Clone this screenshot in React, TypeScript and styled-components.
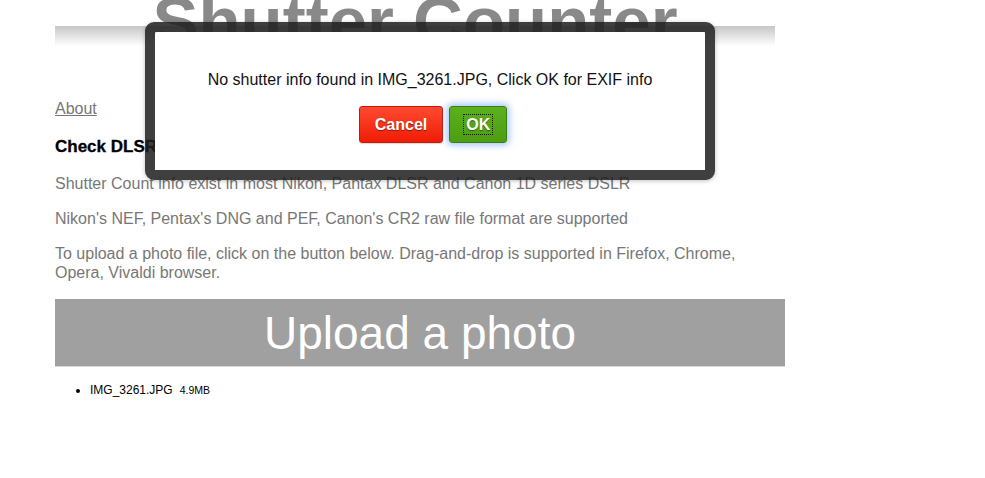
import React from "react";
import styled, { createGlobalStyle } from "styled-components";

const GlobalStyle = createGlobalStyle`
  html, body {
    margin: 0;
    padding: 0;
    background: #fff;
    font-family: "Liberation Sans", Arial, Helvetica, sans-serif;
  }
`;

const Page = styled.div`
  position: relative;
  width: 985px;
  height: 478px;
  overflow: hidden;
  padding-left: 55px;
  box-sizing: border-box;
`;

const Content = styled.div`
  width: 730px;
`;

const Header = styled.header`
  width: 720px;
  height: 46px;
  background: linear-gradient(#c6c6c6, #ffffff) bottom / 100% 20px no-repeat;
`;

const Title = styled.h1`
  margin: 0;
  font-size: 69px;
  line-height: 44px;
  font-weight: 700;
  color: #898989;
  text-align: center;
  white-space: nowrap;
`;

const Nav = styled.div`
  margin-top: 54px;
  line-height: 18px;
  font-size: 16px;
`;

const NavLink = styled.a`
  color: #777;
  text-decoration: underline;
`;

const Heading = styled.h3`
  margin: 19px 0 0;
  font-size: 17px;
  line-height: 20px;
  font-weight: 700;
  color: #000;
  -webkit-text-stroke: 0.3px #000;
`;

const Text = styled.p`
  margin: 16px 0 0;
  font-size: 16px;
  line-height: 19px;
  color: #777;
  &:first-of-type {
    margin-top: 17px;
  }
`;

const UploadBar = styled.div`
  margin-top: 17px;
  height: 67px;
  background: #a0a0a0;
  border-bottom: 1px solid #d8d8d8;
  display: flex;
  align-items: center;
  justify-content: center;
  color: #fff;
  font-size: 46px;
`;

const FileList = styled.ul`
  margin: 16px 0 0;
  padding-left: 35px;
  font-size: 12px;
  line-height: 14px;
  color: #000;
`;

const FileSize = styled.span`
  margin-left: 7px;
  font-size: 10.5px;
`;

const Dialog = styled.div`
  position: absolute;
  left: 145px;
  top: 22px;
  width: 570px;
  height: 158px;
  box-sizing: border-box;
  border: 10px solid rgba(32, 32, 32, 0.86);
  border-radius: 9px;
  background-clip: padding-box;
  box-shadow: 0 1px 4px rgba(0, 0, 0, 0.25);
`;

const DialogBody = styled.div`
  height: 100%;
  background: #fff;
  border-radius: 2px;
  display: flex;
  flex-direction: column;
  align-items: center;
  padding-top: 39px;
  box-sizing: border-box;
`;

const Message = styled.div`
  font-size: 16px;
  line-height: 18px;
  color: #111;
`;

const Buttons = styled.div`
  display: flex;
  gap: 6px;
  margin-top: 17px;
  padding-left: 6px;
`;

const Button = styled.button<{ $tone: "red" | "green" }>`
  height: 37px;
  padding: 0 15px;
  border-radius: 3px;
  font-family: "Liberation Sans", Arial, Helvetica, sans-serif;
  font-size: 16px;
  font-weight: 700;
  color: #fff;
  text-shadow: 0 1px 1px rgba(0, 0, 0, 0.45);
  cursor: pointer;
  border: 1px solid ${(p) => (p.$tone === "red" ? "#c41a06" : "#3d7d12")};
  background: ${(p) =>
    p.$tone === "red"
      ? "linear-gradient(#ff4a32, #f01c04)"
      : "linear-gradient(#5bb01c, #4c9e12)"};
  box-shadow: ${(p) =>
    p.$tone === "green"
      ? "0 0 7px 2px rgba(80, 140, 255, 0.55)"
      : "0 1px 1px rgba(0, 0, 0, 0.15)"};
`;

const FocusRing = styled.span`
  outline: 1px dotted #111;
  outline-offset: 1px;
  padding: 0 1px;
`;

export default function App() {
  return (
    <>
      <GlobalStyle />
      <Page>
        <Content>
          <Header>
            <Title>Shutter Counter</Title>
          </Header>
          <Nav>
            <NavLink href="#about">About</NavLink>
          </Nav>
          <Heading>Check DLSR Shutter Count</Heading>
          <Text>Shutter Count info exist in most Nikon, Pantax DLSR and Canon 1D series DSLR</Text>
          <Text>Nikon's NEF, Pentax's DNG and PEF, Canon's CR2 raw file format are supported</Text>
          <Text>
            To upload a photo file, click on the button below. Drag-and-drop is supported in Firefox, Chrome,
            Opera, Vivaldi browser.
          </Text>
          <UploadBar>Upload a photo</UploadBar>
          <FileList>
            <li>
              IMG_3261.JPG<FileSize>4.9MB</FileSize>
            </li>
          </FileList>
        </Content>
        <Dialog>
          <DialogBody>
            <Message>No shutter info found in IMG_3261.JPG, Click OK for EXIF info</Message>
            <Buttons>
              <Button $tone="red">Cancel</Button>
              <Button $tone="green">
                <FocusRing>OK</FocusRing>
              </Button>
            </Buttons>
          </DialogBody>
        </Dialog>
      </Page>
    </>
  );
}
